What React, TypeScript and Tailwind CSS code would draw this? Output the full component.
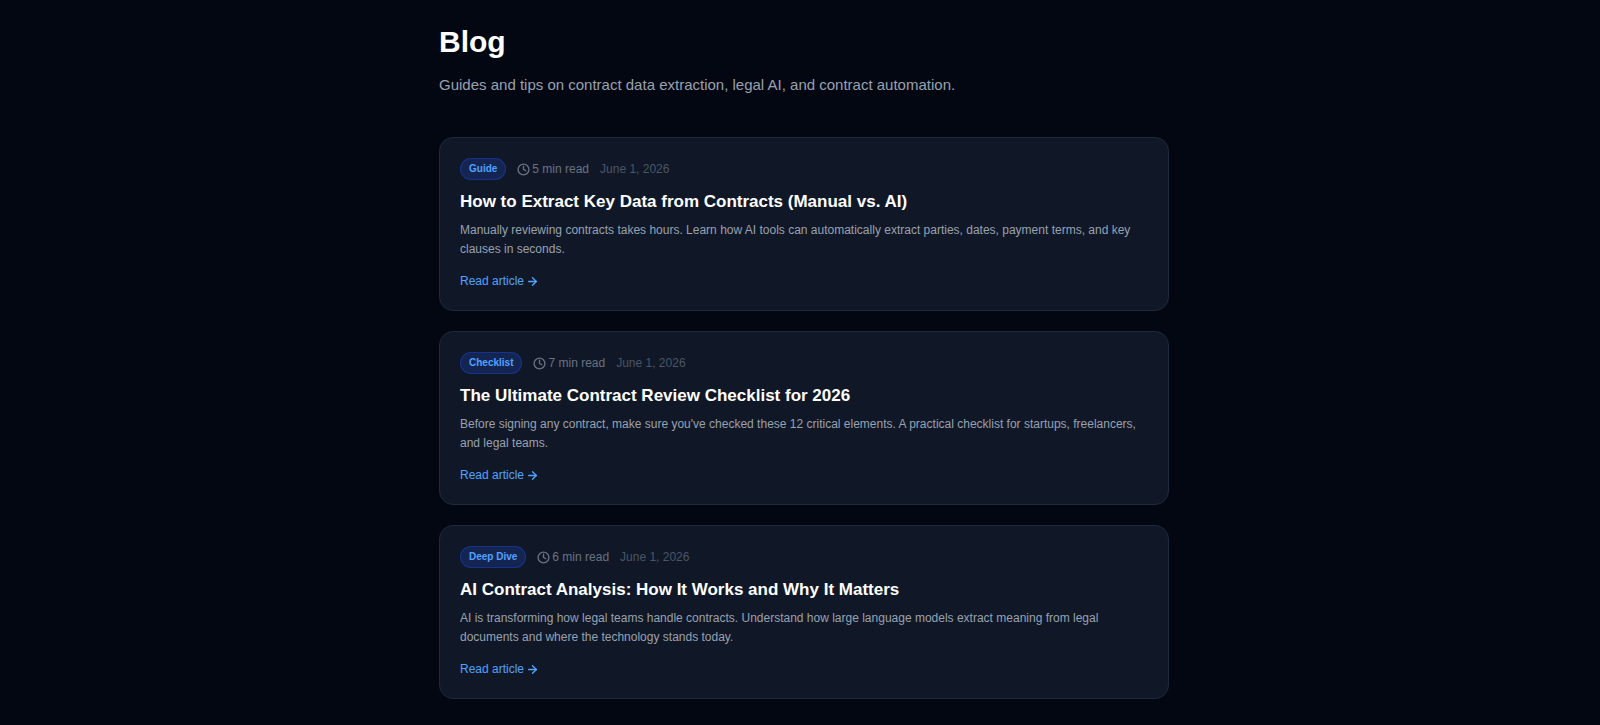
import { ArrowRight, Clock } from 'lucide-react';

type Post = {
  slug: string;
  category: string;
  readTime: string;
  date: string;
  title: string;
  excerpt: string;
};

const posts: Post[] = [
  {
    slug: 'how-to-extract-key-data-from-contracts',
    category: 'Guide',
    readTime: '5 min read',
    date: 'June 1, 2026',
    title: 'How to Extract Key Data from Contracts (Manual vs. AI)',
    excerpt:
      'Manually reviewing contracts takes hours. Learn how AI tools can automatically extract parties, dates, payment terms, and key clauses in seconds.',
  },
  {
    slug: 'contract-review-checklist',
    category: 'Checklist',
    readTime: '7 min read',
    date: 'June 1, 2026',
    title: 'The Ultimate Contract Review Checklist for 2026',
    excerpt:
      "Before signing any contract, make sure you've checked these 12 critical elements. A practical checklist for startups, freelancers, and legal teams.",
  },
  {
    slug: 'ai-contract-analysis',
    category: 'Deep Dive',
    readTime: '6 min read',
    date: 'June 1, 2026',
    title: 'AI Contract Analysis: How It Works and Why It Matters',
    excerpt:
      'AI is transforming how legal teams handle contracts. Understand how large language models extract meaning from legal documents and where the technology stands today.',
  },
];

const PostCard = ({ post }: { post: Post }) => {
  return (
    <article className="rounded-[14px] border border-gray-800 bg-gray-900 p-5">
      <div className="mb-2.5 flex items-center gap-[11px]">
        <span className="rounded-full border border-blue-800/60 bg-blue-900/40 px-2 py-0.5 text-[10px] leading-4 font-bold text-blue-400">
          {post.category}
        </span>
        <span className="flex items-center gap-0.5 text-xs text-gray-500">
          <Clock size={13} strokeWidth={2.5} />
          {post.readTime}
        </span>
        <span className="text-xs text-gray-600">{post.date}</span>
      </div>
      <h2 className="mb-[7px] text-[17px] leading-6 font-bold text-white">{post.title}</h2>
      <p className="mb-3.5 text-xs leading-[19px] text-gray-400">{post.excerpt}</p>
      <a
        href={`/blog/${post.slug}`}
        className="flex w-fit items-center gap-0.5 text-xs leading-[17px] text-blue-400 hover:text-blue-300"
      >
        Read article <ArrowRight size={13} strokeWidth={2.5} />
      </a>
    </article>
  );
};

export default function Blog() {
  return (
    <main className="min-h-screen bg-gray-950 pl-2 font-['Liberation_Sans',Arial,sans-serif] text-white">
      <div className="mx-auto max-w-[730px] py-6">
        <h1 className="mb-[13px] text-3xl font-bold">Blog</h1>
        <p className="mb-10 text-[15px] leading-6 text-gray-400">
          Guides and tips on contract data extraction, legal AI, and contract automation.
        </p>
        <div className="flex flex-col gap-5">
          {posts.map((post) => (
            <PostCard key={post.slug} post={post} />
          ))}
        </div>
      </div>
    </main>
  );
}
